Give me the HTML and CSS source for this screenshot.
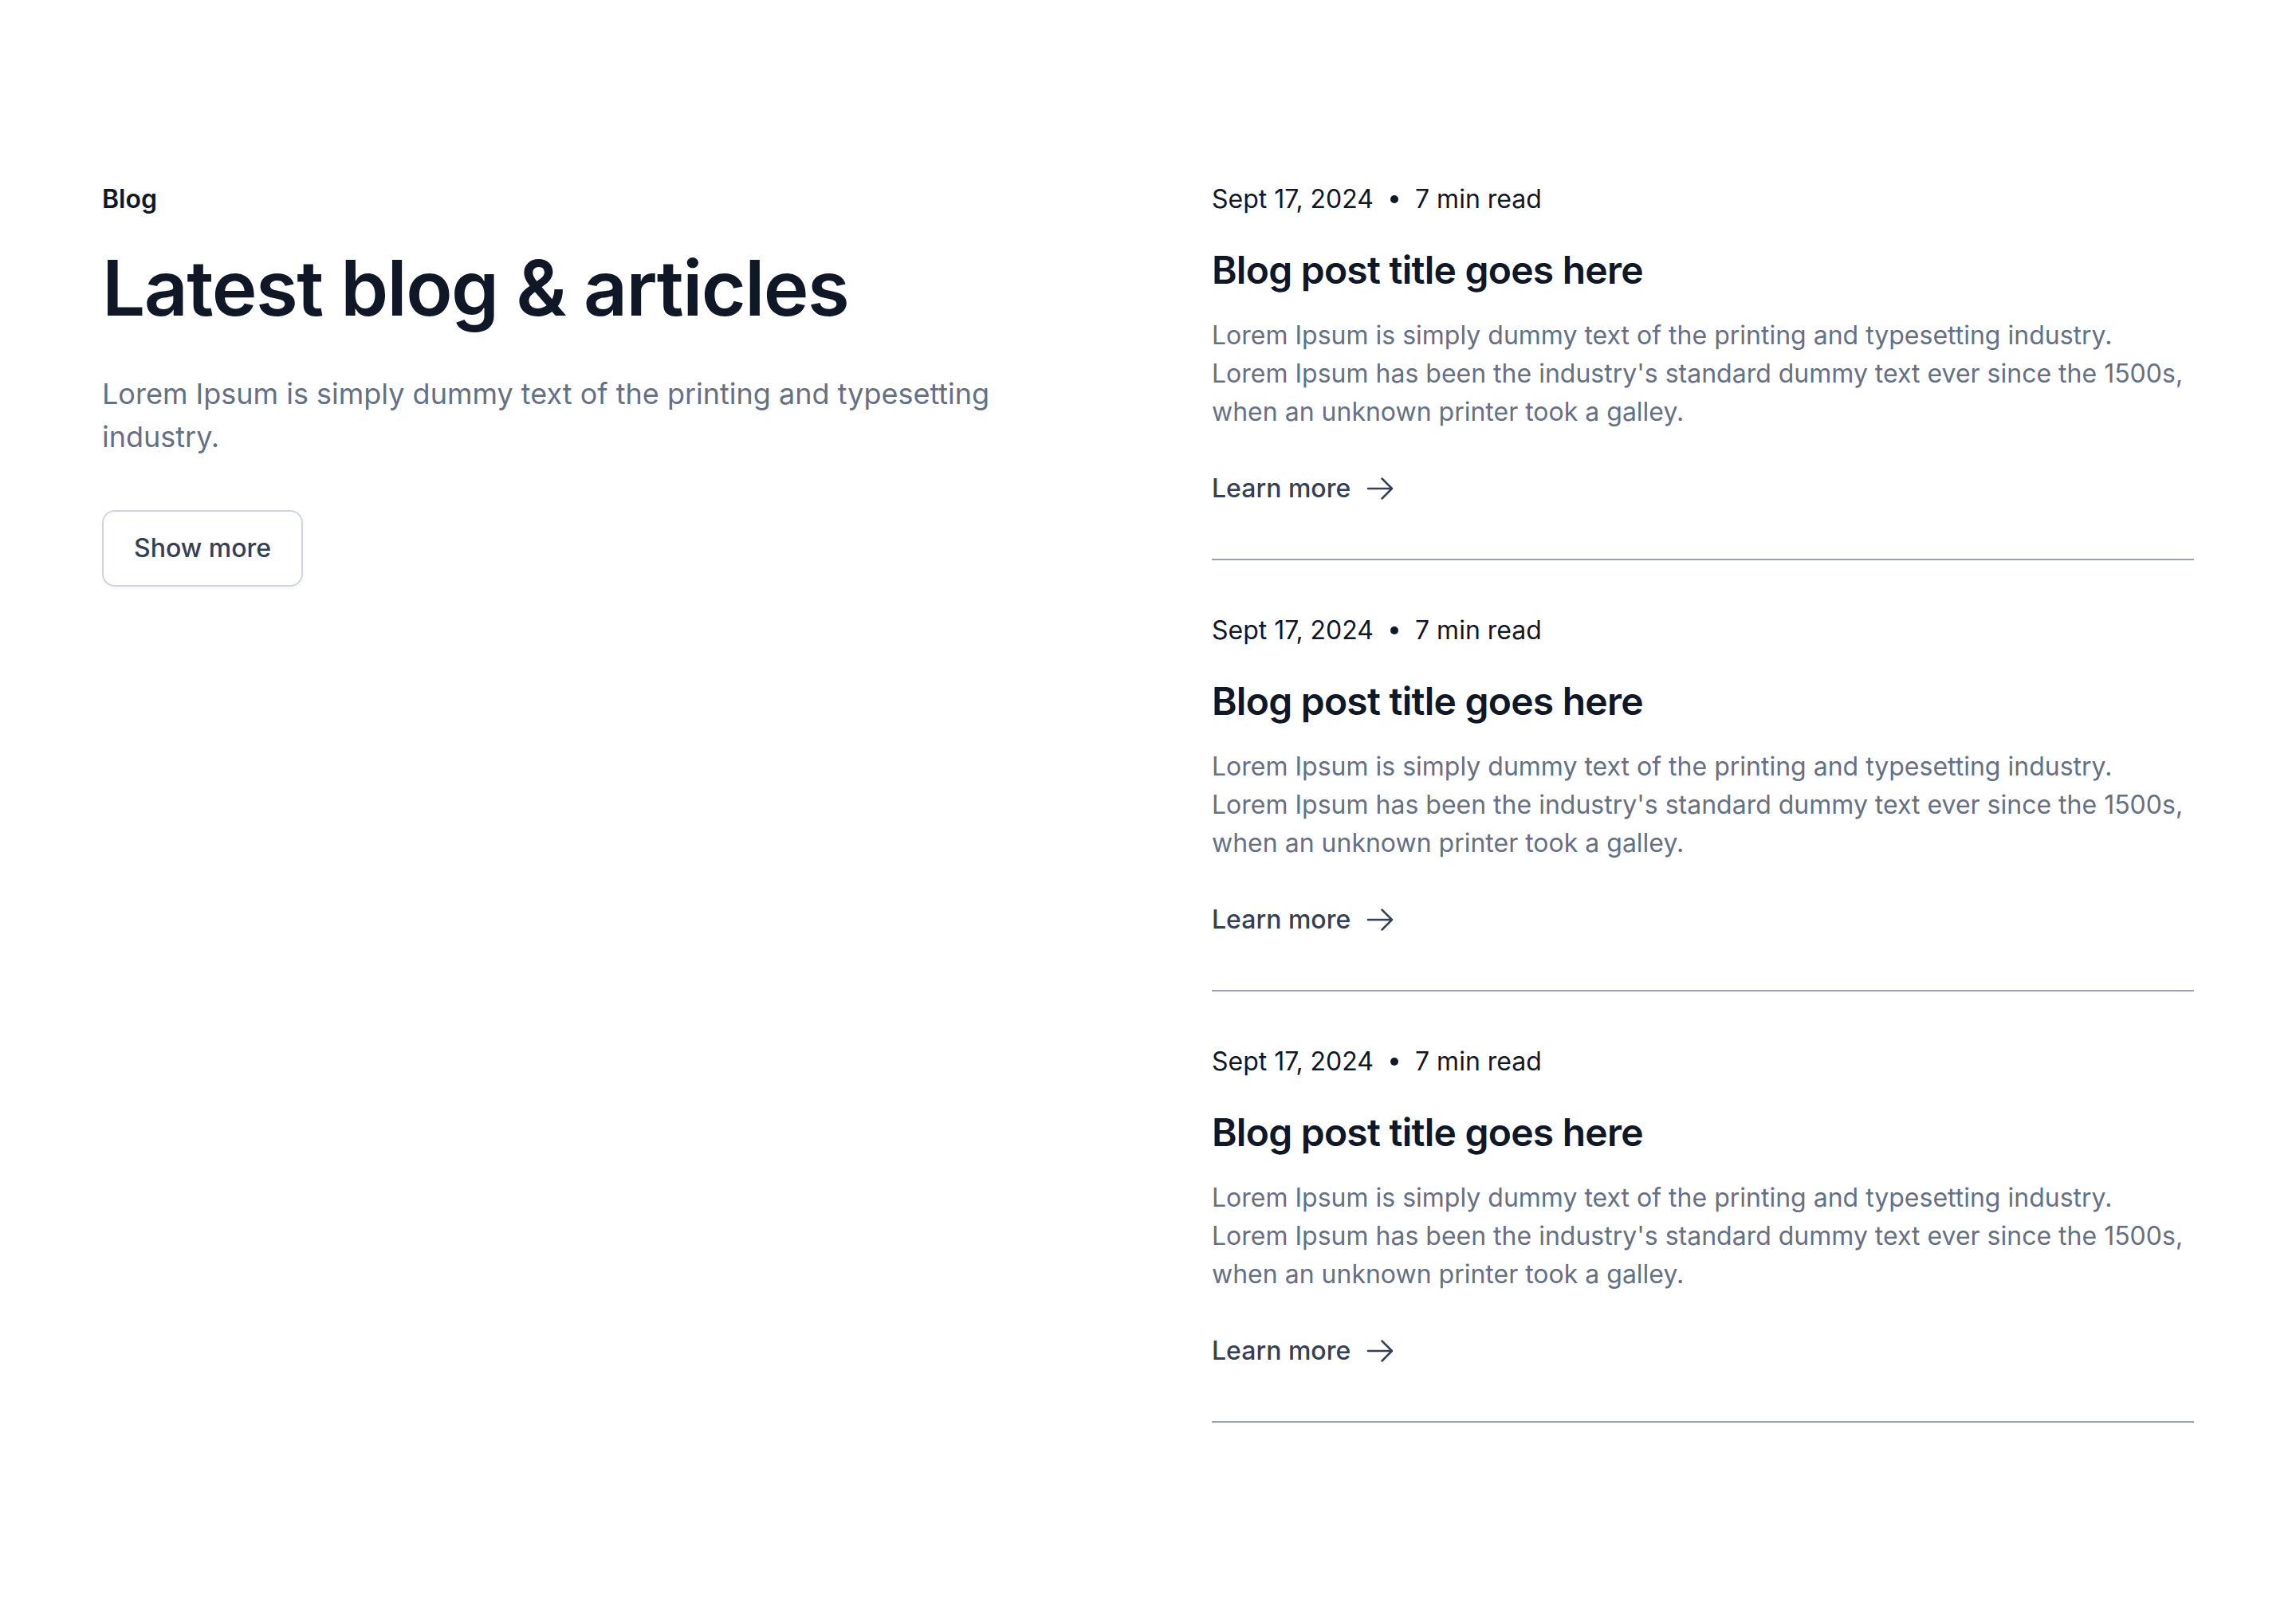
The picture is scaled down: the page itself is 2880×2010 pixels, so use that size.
FILE: index.html
```html
<!DOCTYPE html>
<html lang="en">
<head>
<meta charset="utf-8">
<title>Latest blog &amp; articles</title>
<link rel="stylesheet" href="styles.css">
</head>
<body>
<section class="blog">
  <div class="intro">
    <p class="eyebrow">Blog</p>
    <h1 class="heading">Latest blog &amp; articles</h1>
    <p class="lead">Lorem Ipsum is simply dummy text of the printing and typesetting industry.</p>
    <button class="btn" type="button">Show more</button>
  </div>
  <div class="posts">
    <article class="post">
      <div class="meta"><span>Sept 17, 2024</span><span class="dot"></span><span>7 min read</span></div>
      <h2 class="title">Blog post title goes here</h2>
      <p class="excerpt">Lorem Ipsum is simply dummy text of the printing and typesetting industry. Lorem Ipsum has been the industry's standard dummy text ever since the 1500s, when an unknown printer took a galley.</p>
      <a class="more" href="#">Learn more <svg class="arrow" viewBox="0 0 24 24" fill="none" stroke="currentColor" stroke-width="1.5" stroke-linecap="round" stroke-linejoin="round"><path d="M13.5 4.5L21 12m0 0l-7.5 7.5M21 12H3"/></svg></a>
    </article>
    <article class="post">
      <div class="meta"><span>Sept 17, 2024</span><span class="dot"></span><span>7 min read</span></div>
      <h2 class="title">Blog post title goes here</h2>
      <p class="excerpt">Lorem Ipsum is simply dummy text of the printing and typesetting industry. Lorem Ipsum has been the industry's standard dummy text ever since the 1500s, when an unknown printer took a galley.</p>
      <a class="more" href="#">Learn more <svg class="arrow" viewBox="0 0 24 24" fill="none" stroke="currentColor" stroke-width="1.5" stroke-linecap="round" stroke-linejoin="round"><path d="M13.5 4.5L21 12m0 0l-7.5 7.5M21 12H3"/></svg></a>
    </article>
    <article class="post">
      <div class="meta"><span>Sept 17, 2024</span><span class="dot"></span><span>7 min read</span></div>
      <h2 class="title">Blog post title goes here</h2>
      <p class="excerpt">Lorem Ipsum is simply dummy text of the printing and typesetting industry. Lorem Ipsum has been the industry's standard dummy text ever since the 1500s, when an unknown printer took a galley.</p>
      <a class="more" href="#">Learn more <svg class="arrow" viewBox="0 0 24 24" fill="none" stroke="currentColor" stroke-width="1.5" stroke-linecap="round" stroke-linejoin="round"><path d="M13.5 4.5L21 12m0 0l-7.5 7.5M21 12H3"/></svg></a>
    </article>
  </div>
</section>
</body>
</html>
```

FILE: styles.css
```css
* { box-sizing: border-box; }

html, body {
  margin: 0;
  background: #ffffff;
}

body {
  font-family: Inter, "Noto Sans", "Liberation Sans", sans-serif;
  color: #101828;
  -webkit-font-smoothing: antialiased;
}

.blog {
  display: grid;
  grid-template-columns: 1fr 1232px;
  column-gap: 128px;
  padding: 226px 128px 160px;
  align-items: start;
}

.intro {
  display: flex;
  flex-direction: column;
  align-items: flex-start;
}

.eyebrow {
  margin: 0;
  font-size: 32px;
  line-height: 48px;
  font-weight: 600;
  color: #101828;
}

.heading {
  margin: 30px 0 0;
  font-size: 96px;
  line-height: 1.2;
  font-weight: 600;
  letter-spacing: -0.016em;
  color: #101828;
}

.lead {
  margin: 48px 0 0;
  font-size: 36px;
  line-height: 54px;
  color: #667085;
}

.btn {
  margin-top: 65px;
  padding: 22px 38px;
  font-family: inherit;
  font-size: 32px;
  line-height: 48px;
  font-weight: 500;
  color: #344054;
  background: #ffffff;
  border: 2px solid #d0d5dd;
  border-radius: 16px;
  box-shadow: 0 2px 4px rgba(16, 24, 40, 0.05);
  cursor: pointer;
}

.posts {
  display: flex;
  flex-direction: column;
}

.post {
  padding-bottom: 64px;
  border-bottom: 2px solid #98a2b3;
}

.post + .post {
  margin-top: 64px;
}

.meta {
  display: flex;
  align-items: center;
  gap: 21px;
  font-size: 32px;
  line-height: 48px;
  color: #101828;
}

.dot {
  width: 10px;
  height: 10px;
  border-radius: 50%;
  background: #101828;
}

.title {
  margin: 35px 0 0;
  font-size: 48px;
  line-height: 60px;
  font-weight: 600;
  letter-spacing: -0.016em;
  color: #101828;
}

.excerpt {
  margin: 28px 0 0;
  font-size: 32px;
  line-height: 48px;
  color: #667085;
}

.more {
  margin-top: 48px;
  display: inline-flex;
  align-items: center;
  gap: 17px;
  font-size: 32px;
  line-height: 48px;
  font-weight: 500;
  color: #344054;
  text-decoration: none;
}

.arrow {
  width: 40px;
  height: 40px;
}
```
